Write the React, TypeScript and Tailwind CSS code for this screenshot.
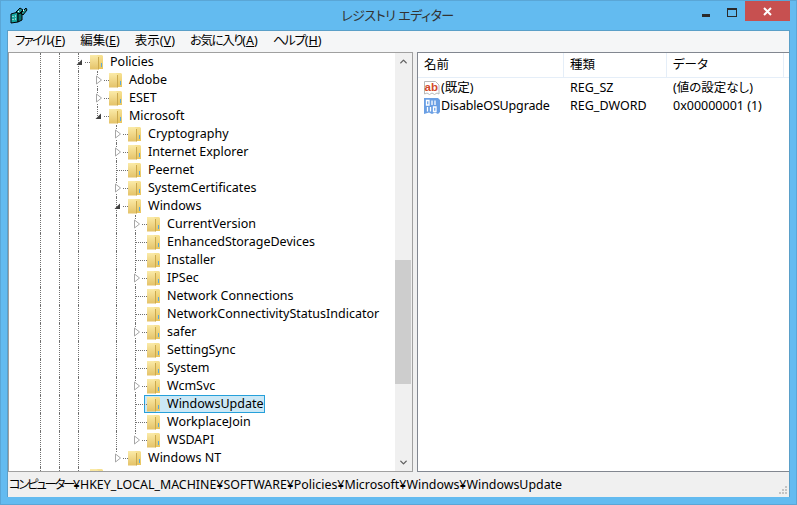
import { ChevronDown, ChevronUp } from "lucide-react";

const UI_FONT = "font-['Noto_Sans','Noto_Sans_CJK_JP',sans-serif]";

interface TreeRow {
  label: string;
  level: number;
  state?: "open" | "closed";
  guides: number[];
  last?: boolean;
  selected?: boolean;
}

const TREE: TreeRow[] = [
  { label: "Policies", level: 2, state: "open", guides: [0, 1] },
  { label: "Adobe", level: 3, state: "closed", guides: [0, 1, 2] },
  { label: "ESET", level: 3, state: "closed", guides: [0, 1, 2] },
  { label: "Microsoft", level: 3, state: "open", guides: [0, 1, 2], last: true },
  { label: "Cryptography", level: 4, state: "closed", guides: [0, 1, 2] },
  { label: "Internet Explorer", level: 4, state: "closed", guides: [0, 1, 2] },
  { label: "Peernet", level: 4, guides: [0, 1, 2] },
  { label: "SystemCertificates", level: 4, state: "closed", guides: [0, 1, 2] },
  { label: "Windows", level: 4, state: "open", guides: [0, 1, 2] },
  { label: "CurrentVersion", level: 5, state: "closed", guides: [0, 1, 2, 4] },
  { label: "EnhancedStorageDevices", level: 5, guides: [0, 1, 2, 4] },
  { label: "Installer", level: 5, guides: [0, 1, 2, 4] },
  { label: "IPSec", level: 5, state: "closed", guides: [0, 1, 2, 4] },
  { label: "Network Connections", level: 5, guides: [0, 1, 2, 4] },
  { label: "NetworkConnectivityStatusIndicator", level: 5, guides: [0, 1, 2, 4] },
  { label: "safer", level: 5, state: "closed", guides: [0, 1, 2, 4] },
  { label: "SettingSync", level: 5, guides: [0, 1, 2, 4] },
  { label: "System", level: 5, guides: [0, 1, 2, 4] },
  { label: "WcmSvc", level: 5, state: "closed", guides: [0, 1, 2, 4] },
  { label: "WindowsUpdate", level: 5, guides: [0, 1, 2, 4], selected: true },
  { label: "WorkplaceJoin", level: 5, guides: [0, 1, 2, 4] },
  { label: "WSDAPI", level: 5, state: "closed", guides: [0, 1, 2, 4], last: true },
  { label: "Windows NT", level: 4, state: "closed", guides: [0, 1, 2], last: true },
  { label: "", level: 2, guides: [0, 1] },
];

function FolderIcon() {
  return (
    <svg width="13" height="16" viewBox="0 0 13 16" className="shrink-0">
      <defs>
        <linearGradient id="fldL" x1="0" y1="0" x2="0" y2="1">
          <stop offset="0" stopColor="#fbeba8" />
          <stop offset="1" stopColor="#e4c268" />
        </linearGradient>
        <linearGradient id="fldR" x1="0" y1="0" x2="0" y2="1">
          <stop offset="0" stopColor="#f7e294" />
          <stop offset="1" stopColor="#e8c45e" />
        </linearGradient>
      </defs>
      <path d="M6 1h6l1 1v13H6z" fill="url(#fldR)" />
      <path d="M0 1h6.500l2 1.500V15.500H0z" fill="url(#fldL)" />
      <path d="M8.500 3v12.500" stroke="#cba94e" strokeWidth="1" />
      <path d="M11.500 9v4" stroke="#5aa9dc" strokeWidth="1" />
    </svg>
  );
}

function Expander({ state }: { state: "open" | "closed" }) {
  if (state === "open") {
    return (
      <svg width="7" height="7" viewBox="0 0 7 7" className="absolute left-[-2px] top-[6px]">
        <path d="M6 0.5V6H0.5z" fill="#404040" />
      </svg>
    );
  }
  return (
    <svg width="7" height="10" viewBox="0 0 7 10" className="absolute left-[-1px] top-[4px] bg-white">
      <path d="M0.5 1v8L5.5 5z" fill="#fff" stroke="#a6a6a6" />
    </svg>
  );
}

function Row({ row }: { row: TreeRow }) {
  const cells = [];
  for (let i = 0; i < row.level; i++) {
    cells.push(
      <div
        key={i}
        className={`w-[19px] h-[18px] shrink-0 ${
          row.guides.includes(i) ? "border-l border-dotted border-[#707070]" : ""
        }`}
      />,
    );
  }
  return (
    <div className="flex h-[18px] items-center">
      {cells}
      <div className="relative w-[12px] h-[18px] shrink-0">
        <div
          className={`absolute left-0 top-0 border-l border-dotted border-[#707070] ${
            row.last ? "h-[9px]" : "h-[18px]"
          }`}
        />
        <div
          className={`absolute top-[9px] right-0 border-t border-dotted border-[#707070] ${
            row.state ? "w-[5px]" : "w-[11px]"
          }`}
        />
        {row.state && <Expander state={row.state} />}
      </div>
      <div
        className={`flex items-center h-[18px] ml-[-3px] pl-[2px] pr-[1px] border whitespace-nowrap ${
          row.selected ? "border-[#26a0da] bg-[#cbe8f6]" : "border-transparent"
        }`}
      >
        <FolderIcon />
        <span className="ml-[7px] text-[12.5px] leading-[16px] text-[#000]">{row.label}</span>
      </div>
    </div>
  );
}

function RegIcon() {
  return (
    <svg width="18" height="17" viewBox="0 0 18 17" className="shrink-0">
      <path d="M1 7l7-2v10l-7 1z" fill="#18a6a0" stroke="#000" />
      <path d="M8 5l4 2v6l-4 2z" fill="#0b6f6b" stroke="#000" />
      <path d="M2.5 9h1v1h-1zM5 8.500h1v1H5zM2.500 12h1v1h-1zM5 11.500h1v1H5z" fill="#fff" />
      <path d="M6 5l4-4 3 2-4 4zM11 6l5-5 1 2-4 5z" fill="#1f8f8c" stroke="#000" />
      <path d="M8 4h1v1H8zM13 3h1v1h-1z" fill="#fff" />
    </svg>
  );
}

function StringIcon() {
  return (
    <svg width="16" height="16" viewBox="0 0 16 16" className="shrink-0">
      <path d="M0.500 1.500h11l3.500 3.500v9l-2-1-2.500 1.500-2.500-1.500-2.500 1.500-2.500-1.500-2.500 1z" fill="#fff" stroke="#b9b9b9" />
      <text x="0.500" y="10.500" fontSize="11.500" fontWeight="700" fontFamily="Liberation Sans, sans-serif" fill="#d2492a">
        ab
      </text>
    </svg>
  );
}

function DwordIcon() {
  return (
    <svg width="16" height="16" viewBox="0 0 16 16" className="shrink-0">
      <path d="M0 0h14l2 2v12l-2 2-3-1.500-3 1.500-3-1.500-5 1.500z" fill="#6a9fe4" />
      <path
        d="M2.500 2.500h2.500v4.500h-2.500zM8 2.500v4.500M11 2.500v4.500M3.500 9v4.500M6.500 9v4.500M9.500 9h2.500v4.500h-2.500z"
        fill="none"
        stroke="#fff"
        strokeWidth="1.300"
      />
    </svg>
  );
}

function Mnemonic({ kana, letter, track }: { kana: string; letter: string; track?: string }) {
  return (
    <span className="whitespace-nowrap">
      <span className={track}>{kana}</span>(<span className="underline">{letter}</span>)
    </span>
  );
}

export default function App() {
  return (
    <div
      className={`w-[797px] h-[505px] flex flex-col overflow-hidden bg-[#63bbf0] border border-[#5aa6d6] ${UI_FONT} [font-feature-settings:"palt"]`}
    >
      {/* Title bar */}
      <div className="relative flex h-[29px] shrink-0 items-center justify-center pr-[2px]">
        <div className="absolute left-[9px] top-[6px]">
          <RegIcon />
        </div>
        <span className="text-[13px] text-[#333] tracking-[-0.5px]">レジストリ エディター</span>
        <div className="absolute right-[6px] top-0 flex h-[21px] items-start">
          <div className="w-[8px] h-[3px] mt-[13px] mr-[17px] bg-[#2a2a2a]" />
          <div className="w-[10px] h-[9px] mt-[7px] mr-[8px] border border-t-2 border-[#2a2a2a]" />
          <div className="flex w-[45px] h-[20px] items-center justify-center bg-[#c75050]">
            <svg width="9" height="9" viewBox="0 0 9 9">
              <path d="M1 1l7 7M8 1l-7 7" stroke="#fff" strokeWidth="2" />
            </svg>
          </div>
        </div>
      </div>

      {/* Client area */}
      <div className="flex flex-col flex-1 min-h-0 mx-[6px] border border-[#5a9fc8] border-b-0 bg-[#f0f0f0]">
        <div className="flex h-[21px] shrink-0 items-center gap-[15px] pl-[7px] bg-[#f5f6f7] text-[12.5px] text-[#000]">
          <Mnemonic kana="ファイル" letter="F" track="tracking-[-1.75px]" />
          <Mnemonic kana="編集" letter="E" />
          <Mnemonic kana="表示" letter="V" />
          <Mnemonic kana="お気に入り" letter="A" track="tracking-[-1.4px]" />
          <Mnemonic kana="ヘルプ" letter="H" track="tracking-[-1.3px]" />
        </div>

        <div className="flex flex-1 min-h-0 bg-[#f0f0f0]">
          {/* Tree pane */}
          <div className="flex w-[405px] shrink-0 border border-[#a0a0a0]">
            <div className="flex-1 min-w-0 overflow-hidden bg-white pl-[31px]">
              {TREE.map((row, i) => (
                <Row key={i} row={row} />
              ))}
            </div>
            <div className="flex w-[17px] shrink-0 flex-col bg-[#f0f0f0] pr-[1px]">
              <div className="flex h-[17px] items-center justify-center text-[#606060]">
                <ChevronUp size={11} strokeWidth={3} />
              </div>
              <div className="h-[190px]" />
              <div className="h-[124px] bg-[#cdcdcd]" />
              <div className="flex-1" />
              <div className="flex h-[17px] items-center justify-center text-[#606060]">
                <ChevronDown size={11} strokeWidth={3} />
              </div>
            </div>
          </div>

          {/* List pane */}
          <div className="flex-1 min-w-0 ml-[4px] border border-[#828790] border-r-0 bg-white text-[12.5px] text-[#000]">
            <div className="flex h-[25px] items-center border-b border-[#e5eef8]">
              <div className="w-[146px] h-full flex items-center pl-[6px] border-r border-[#e5eef8]">名前</div>
              <div className="w-[103px] h-full flex items-center pl-[6px] border-r border-[#e5eef8]">種類</div>
              <div className="w-[117px] h-full flex items-center pl-[6px] border-r border-[#e5eef8]">データ</div>
            </div>
            <div className="flex h-[18px] mt-[1px] items-center whitespace-nowrap">
              <div className="w-[146px] flex items-center gap-[1px] pl-[6px]">
                <StringIcon />
                <span>(既定)</span>
              </div>
              <div className="w-[103px] pl-[6px]">REG_SZ</div>
              <div className="pl-[6px]">(値の設定なし)</div>
            </div>
            <div className="flex h-[18px] items-center whitespace-nowrap">
              <div className="w-[146px] flex items-center gap-[1px] pl-[6px]">
                <DwordIcon />
                <span className="tracking-[-0.15px]">DisableOSUpgrade</span>
              </div>
              <div className="w-[103px] pl-[6px]">REG_DWORD</div>
              <div className="pl-[6px]">0x00000001 (1)</div>
            </div>
          </div>
        </div>

        {/* Status bar */}
        <div className="relative flex h-[25px] shrink-0 items-center pl-[1px] pt-[2px] bg-[#f0f0f0] text-[12.4px] text-[#000] whitespace-nowrap">
          <span className="tracking-[-2.3px]">コンピューター</span>
          ¥HKEY_LOCAL_MACHINE¥SOFTWARE¥Policies¥Microsoft¥Windows¥WindowsUpdate
          <svg width="9" height="9" viewBox="0 0 9 9" className="absolute right-[1px] bottom-[2px]">
            <path d="M6 0h2v2H6zM3 3h2v2H3zM6 3h2v2H6zM0 6h2v2H0zM3 6h2v2H3zM6 6h2v2H6z" fill="#c4c4c4" />
          </svg>
        </div>
      </div>
      <div className="h-[7px] shrink-0" />
    </div>
  );
}
